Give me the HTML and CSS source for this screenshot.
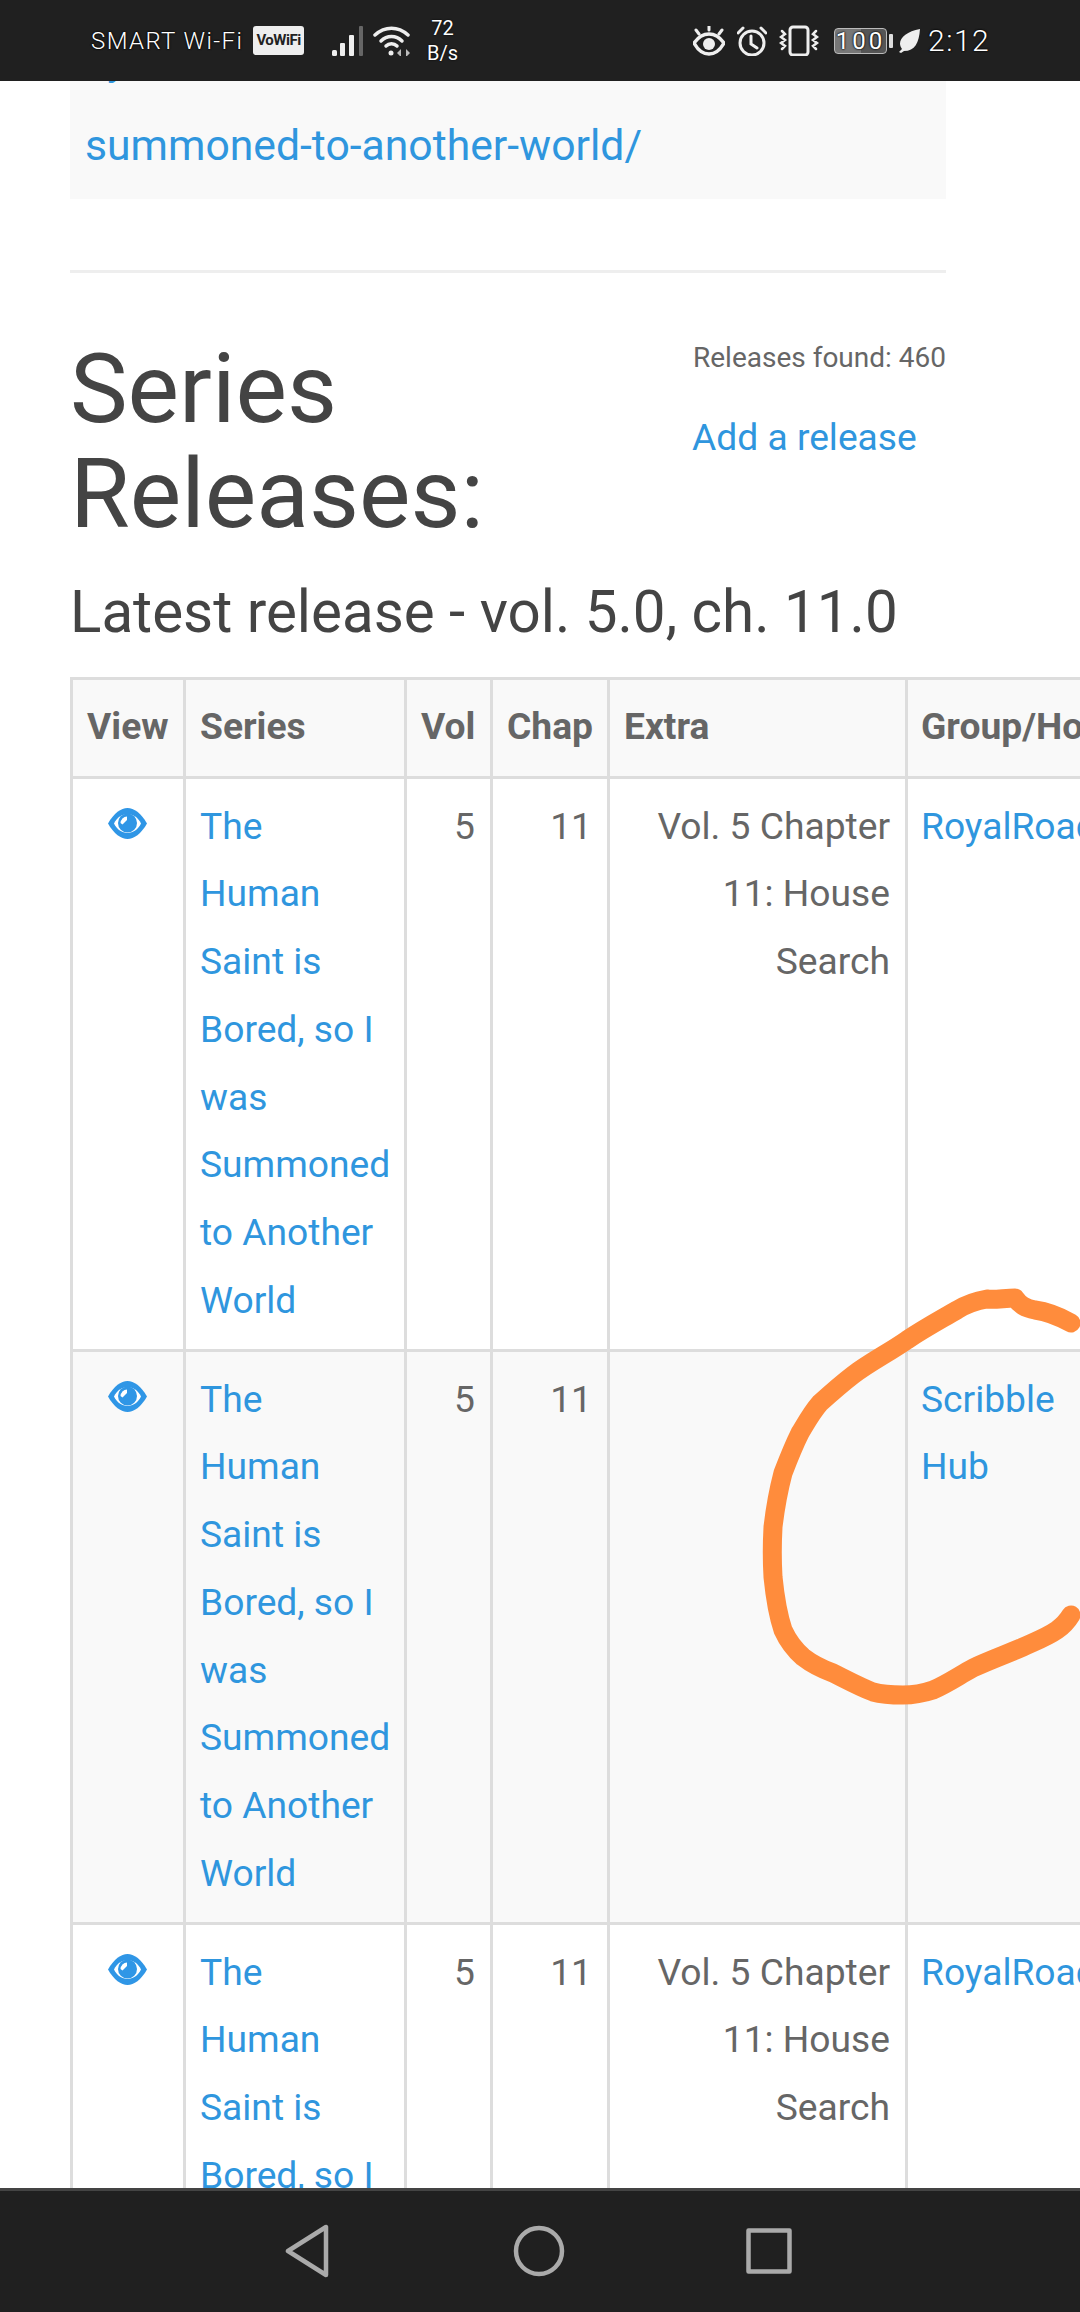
FILE: index.html
```html
<!DOCTYPE html>
<html lang="en">
<head>
  <meta charset="UTF-8" />
  <title>Series Releases</title>
  <link rel="stylesheet" href="styles.css">
</head>
<body>
  <svg class="defs" width="0" height="0">
    <symbol id="eye" viewBox="0 0 39 31">
      <path fill="#2f96e6" d="M0 15.5C6 5 13 0 19.5 0S33 5 39 15.5C33 26 26 31 19.5 31S6 26 0 15.5Z"/>
      <path fill="#fff" d="M6 15.5C9 9.5 14 6 19.5 6S30 9.5 33 15.5C30 21.500 25 25 19.500 25S9 21.500 6 15.500Z"/>
      <circle fill="#2f96e6" cx="19.500" cy="15" r="9.500"/>
      <path fill="#fff" d="M19 8.500a7 7 0 0 0-6.500 6.500l2 1.500 4.500-4.500Z"/>
    </symbol>
  </svg>

  <header class="status-bar">
    <div class="status-left">
      <span class="carrier">SMART Wi-Fi</span>
      <span class="vowifi">VoWiFi</span>
      <svg class="signal" width="32" height="30" viewBox="0 0 32 30">
        <rect x="0" y="24" width="5" height="6" rx="1.500" fill="#eee"/>
        <rect x="8" y="17" width="5" height="13" rx="1" fill="#eee"/>
        <rect x="17" y="9" width="5" height="21" rx="1" fill="#eee"/>
        <rect x="27" y="0" width="4" height="30" rx="1" fill="#666"/>
      </svg>
      <svg class="wifi" width="37" height="30" viewBox="0 0 37 30" fill="none" stroke="#eee" stroke-width="3.500" stroke-linecap="round">
        <path d="M2 9C12 0 25 0 35 9"/>
        <path d="M8 15C14 9 23 9 29 15"/>
        <path d="M13 20C16 17 21 17 24 20"/>
        <circle cx="18" cy="27" r="2.500" fill="#eee" stroke="none"/>
        <path d="M24 27l4-4v8ZM33 23l4 4-4 4Z" fill="#bbb" stroke="none"/>
      </svg>
      <span class="speed">72<br>B/s</span>
    </div>
    <div class="status-right">
      <svg width="32" height="30" viewBox="0 0 32 30" fill="none" stroke="#eee" stroke-width="3.500" stroke-linecap="round">
        <path d="M1 17C6 10 11 8 16 8S26 10 31 17C26 26 21 28 16 28S6 26 1 17Z"/>
        <circle cx="16" cy="18" r="6" fill="#eee" stroke="none"/>
        <path d="M16 0V4M3 4l3 4M29 4l-3 4" stroke-width="3"/>
      </svg>
      <svg width="30" height="30" viewBox="0 0 30 30" fill="none" stroke="#eee" stroke-width="3" stroke-linecap="round">
        <circle cx="15" cy="17" r="12"/>
        <path d="M14 10V18L20 22M1 7L6 2M29 7L24 2"/>
      </svg>
      <svg width="40" height="31" viewBox="0 0 40 31" fill="none" stroke="#eee" stroke-width="3" stroke-linecap="round">
        <rect x="11" y="2" width="18" height="28" rx="3"/>
        <path d="M3 6l3 3-4 3 4 3-4 3 4 3-3 3M37 6l-3 3 4 3-4 3 4 3-4 3 3 3" stroke-width="2.500"/>
      </svg>
      <div class="battery">
        <span class="battery-body">100</span>
        <span class="battery-nub"></span>
      </div>
      <svg class="leaf" width="22" height="24" viewBox="0 0 22 24"><path fill="#eee" d="M22 0C21 14 17 22 6 22L3 24 1 23 4 20C-2 12 6 3 22 0Z"/></svg>
      <span class="clock">2:12</span>
    </div>
  </header>

  <main class="page">
    <blockquote class="url-box">
      <a class="url-cut" href="#">y</a><br>
      <a href="#">summoned-to-another-world/</a>
    </blockquote>
    <hr class="divider">

    <section class="releases-head">
      <h2>Series Releases:</h2>
      <div class="releases-side">
        <p class="found">Releases found: 460</p>
        <a class="add" href="#">Add a release</a>
      </div>
    </section>
    <h3>Latest release - vol. 5.0, ch. 11.0</h3>

    <table class="releases">
      <colgroup>
        <col class="c-view"><col class="c-series"><col class="c-vol"><col class="c-chap"><col class="c-extra"><col class="c-group">
      </colgroup>
      <thead>
        <tr><th>View</th><th>Series</th><th>Vol</th><th>Chap</th><th>Extra</th><th>Group/Host</th></tr>
      </thead>
      <tbody>
        <tr>
          <td class="view"><svg width="39" height="31"><use href="#eye"/></svg></td>
          <td><a href="#">The Human Saint is Bored, so I was Summoned to Another World</a></td>
          <td class="num">5</td>
          <td class="num">11</td>
          <td class="num">Vol. 5 Chapter 11: House Search</td>
          <td><a class="nowrap" href="#">RoyalRoad</a></td>
        </tr>
        <tr class="alt">
          <td class="view"><svg width="39" height="31"><use href="#eye"/></svg></td>
          <td><a href="#">The Human Saint is Bored, so I was Summoned to Another World</a></td>
          <td class="num">5</td>
          <td class="num">11</td>
          <td class="num"></td>
          <td><a href="#">Scribble<br>Hub</a></td>
        </tr>
        <tr>
          <td class="view"><svg width="39" height="31"><use href="#eye"/></svg></td>
          <td><a href="#">The Human Saint is Bored, so I was Summoned to Another World</a></td>
          <td class="num">5</td>
          <td class="num">11</td>
          <td class="num">Vol. 5 Chapter 11: House Search</td>
          <td><a class="nowrap" href="#">RoyalRoad</a></td>
        </tr>
      </tbody>
    </table>

    <!-- marker scribble somebody drew on the screenshot -->
    <svg class="scribble" width="1080" height="500" viewBox="0 1250 1080 500" fill="none" stroke="#ff8c3c" stroke-width="19" stroke-linecap="round" stroke-linejoin="round">
      <path d="M1071 1323C1062 1318 1050 1312 1035 1310C1025 1308 1020 1305 1015 1298C1005 1298 995 1300 987 1299C975 1301 965 1305 957 1310C940 1320 925 1328 907 1340C890 1352 870 1362 853 1375C840 1385 830 1394 820 1403C812 1412 806 1423 800 1433C793 1447 788 1460 783 1473C778 1492 775 1510 773 1527C772 1545 772 1560 773 1577C775 1597 778 1615 783 1630C788 1641 795 1650 803 1657C812 1664 822 1669 833 1673C847 1680 860 1687 873 1692C884 1695 893 1695 903 1695C914 1695 924 1693 933 1690C947 1684 960 1675 973 1668C990 1660 1007 1654 1023 1647C1036 1641 1047 1637 1057 1630C1064 1625 1068 1620 1071 1615"/>
    </svg>
  </main>

  <nav class="nav-bar">
    <svg class="nav-back" width="44" height="54" viewBox="0 0 44 54" fill="none" stroke="#aaa" stroke-width="4.500" stroke-linejoin="round"><path d="M41 3V51L3 27Z"/></svg>
    <svg width="52" height="52" viewBox="0 0 52 52" fill="none" stroke="#aaa" stroke-width="4.500"><circle cx="26" cy="26" r="23"/></svg>
    <svg width="46" height="46" viewBox="0 0 46 46" fill="none" stroke="#aaa" stroke-width="4.500" stroke-linejoin="round"><rect x="2.500" y="2.500" width="41" height="41"/></svg>
  </nav>
</body>
</html>
```

FILE: styles.css
```css
html, body {
  margin: 0;
  height: 100%;
}

body {
  width: 1080px;
  height: 2312px;
  display: flex;
  flex-direction: column;
  overflow: hidden;
  background: #fff;
  font-family: Roboto, sans-serif;
  font-size: 37.2px;
  line-height: 67.7px;
  color: #666;
}

a {
  color: #2f96de;
  text-decoration: none;
}

.defs {
  position: absolute;
}

/* status bar */
.status-bar {
  flex: none;
  height: 81px;
  box-sizing: border-box;
  padding: 0 89px 0 91px;
  display: flex;
  justify-content: space-between;
  align-items: center;
  background: #202020;
  color: #fff;
  line-height: 1;
}

.status-left, .status-right {
  display: flex;
  align-items: center;
}

.carrier {
  font-size: 24px;
  font-weight: 300;
  letter-spacing: 1.4px;
  width: 160px;
  white-space: nowrap;
  text-shadow: 0 0 2px #000, 0 0 2px #000;
}

.vowifi {
  width: 51px;
  height: 29px;
  margin: 0 28px 0 2px;
  border-radius: 3px;
  background: #eee;
  color: #222;
  font-size: 15px;
  font-weight: 700;
  line-height: 29px;
  text-align: center;
  letter-spacing: -0.5px;
}

.wifi {
  margin: 0 17px 0 9px;
}

.speed {
  font-size: 20px;
  line-height: 25px;
  text-align: center;
  text-shadow: 0 0 2px #000;
}

.status-right {
  gap: 12px;
}

.battery {
  display: flex;
  align-items: center;
  gap: 2px;
  margin-left: 3px;
}

.battery-body {
  width: 51px;
  height: 24px;
  border: 1.5px solid #bbb;
  border-radius: 4px;
  background: linear-gradient(90deg, #777 50%, #555 50%);
  font-size: 24px;
  line-height: 24px;
  text-align: center;
  letter-spacing: 3px;
  text-shadow: 0 0 2px #000, 0 0 2px #000;
}

.battery-nub {
  width: 4px;
  height: 14px;
  border-radius: 1px;
  background: #ddd;
}

.leaf {
  margin-left: -7px;
}

.clock {
  width: 63px;
  margin-left: -4px;
  font-size: 30px;
  font-weight: 300;
  letter-spacing: 1.5px;
  white-space: nowrap;
  text-shadow: 0 0 2px #000, 0 0 2px #000;
}

/* page content */
.page {
  flex: 1;
  position: relative;
  min-height: 0;
  overflow: hidden;
  padding: 0 0 0 70px;
}

.url-box {
  width: 876px;
  box-sizing: border-box;
  margin: -65px 0 0;
  padding: 0 15px 11px;
  background: #f9f9f9;
  font-size: 42.7px;
  line-height: 86px;
}

.url-cut {
  margin-left: 22px;
}

.divider {
  width: 876px;
  height: 3px;
  margin: 71px 0 0;
  border: 0;
  background: #eee;
}

.releases-head {
  width: 876px;
  display: flex;
  justify-content: space-between;
  margin-top: 64px;
}

h2 {
  width: 460px;
  margin: 0;
  font-size: 97px;
  font-weight: 400;
  line-height: 105px;
  color: #444;
}

.releases-side {
  width: 254px;
  line-height: 1;
}

.found {
  margin: 0;
  padding-top: 5px;
  font-size: 28px;
  line-height: 32px;
  text-align: right;
  white-space: nowrap;
}

.add {
  display: block;
  margin-top: 41px;
  font-size: 37.2px;
  line-height: 44px;
}

h3 {
  margin: 25px 0 0;
  font-size: 58.3px;
  font-weight: 400;
  line-height: 80px;
  color: #444;
}

/* releases table */
.releases {
  table-layout: fixed;
  width: 1234px;
  margin-top: 25px;
  border-collapse: collapse;
}

.c-view { width: 113px; }
.c-series { width: 221px; }
.c-vol { width: 86px; }
.c-chap { width: 117px; }
.c-extra { width: 298px; }
.c-group { width: 399px; }

th, td {
  padding: 14px 15px 14.4px 14px;
  border: 3px solid #ddd;
  vertical-align: top;
  text-align: left;
}

th {
  padding-top: 13px;
  padding-bottom: 15px;
  background: #f9f9f9;
  font-weight: 700;
}

th:last-child, td:last-child {
  padding-left: 13px;
}

.alt td {
  background: #f9f9f9;
}

.view {
  text-align: center;
}

.view svg {
  display: block;
  margin: 15px auto 0;
}

.num {
  text-align: right;
}

.nowrap {
  white-space: nowrap;
}

.scribble {
  position: absolute;
  left: 0;
  top: 1169px;
}

/* navigation bar */
.nav-bar {
  flex: none;
  height: 124px;
  box-sizing: border-box;
  padding-bottom: 2px;
  border-top: 3px solid #444;
  background: #202020;
  display: flex;
  justify-content: center;
  align-items: center;
  gap: 181px;
}

.nav-back {
  margin-left: -3px;
  margin-right: 3px;
}
```
